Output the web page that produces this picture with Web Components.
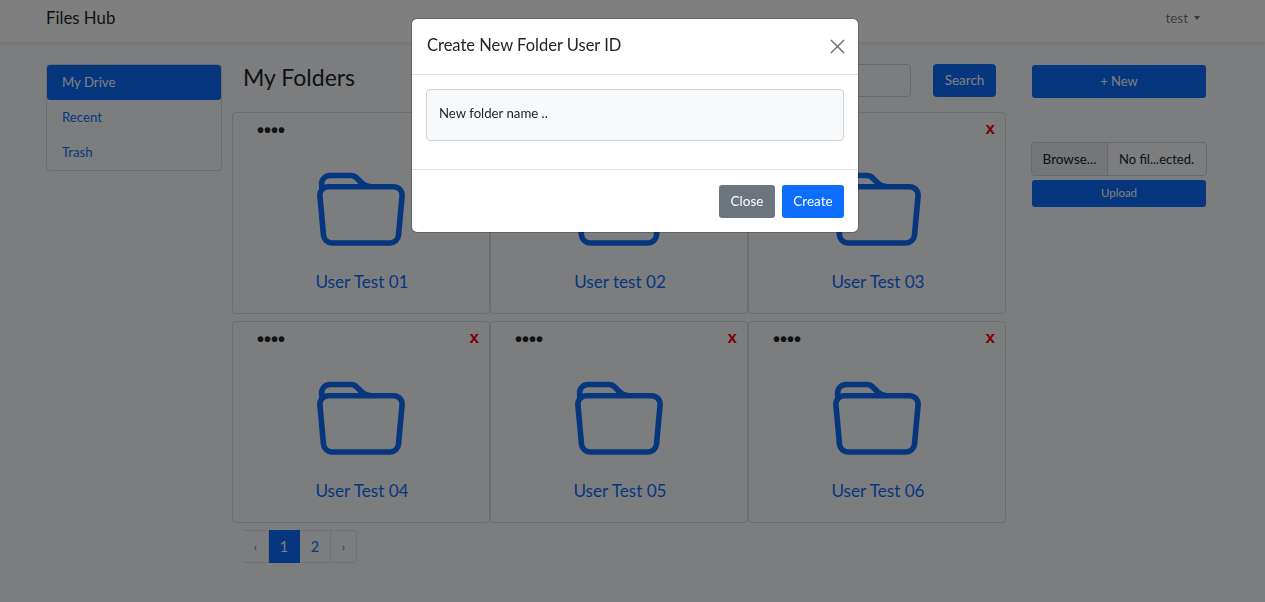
<!DOCTYPE html>
<html lang="en">
<head>
<meta charset="utf-8">
<title>Files Hub</title>
<style>
html, body { margin: 0; height: 100%; }
body {
    background: #f8fafc;
    color: #212529;
    font: 14.4px/1.5 Lato, "Noto Sans", sans-serif;
    overflow: hidden;
}
</style>
</head>
<body>

<hub-navbar brand="Files Hub" user="test"></hub-navbar>

<hub-layout>
    <hub-sidenav slot="left"></hub-sidenav>

    <hub-header slot="main" title="My Folders"></hub-header>
    <hub-folders slot="main">
        <hub-folder>User Test 01</hub-folder>
        <hub-folder>User test 02</hub-folder>
        <hub-folder>User Test 03</hub-folder>
        <hub-folder>User Test 04</hub-folder>
        <hub-folder>User Test 05</hub-folder>
        <hub-folder>User Test 06</hub-folder>
    </hub-folders>
    <hub-pager slot="main"></hub-pager>

    <hub-actions slot="right"></hub-actions>
</hub-layout>

<hub-modal heading="Create New Folder User ID" placeholder="New folder name .."></hub-modal>

<script>
const folderPath = 'M.54 3.87.5 3a2 2 0 0 1 2-2h3.672a2 2 0 0 1 1.414.586l.828.828A2 2 0 0 0 9.828 3h3.982a2 2 0 0 1 1.992 2.181l-.637 7A2 2 0 0 1 13.174 14H2.826a2 2 0 0 1-1.991-1.819l-.637-7a1.99 1.99 0 0 1 .342-1.31zM2.19 4a1 1 0 0 0-.996 1.09l.637 7a1 1 0 0 0 .995.91h10.348a1 1 0 0 0 .995-.91l.637-7A1 1 0 0 0 13.81 4H2.19zm4.69-1.707A1 1 0 0 0 6.172 2H2.5a1 1 0 0 0-1 .981l.006.139C1.72 3.042 1.95 3 2.19 3h5.396l-.707-.707z';

customElements.define('hub-navbar', class extends HTMLElement {
    constructor() {
        super();
        this.attachShadow({ mode: 'open' }).innerHTML = `
        <style>
        :host {
            display: flex;
            align-items: center;
            justify-content: space-between;
            height: 42px;
            padding: 0 65px 0 46px;
            background: #fff;
            box-shadow: 0 2px 4px rgba(0,0,0,.075);
        }
        #brand { font-size: 16.8px; color: rgba(0,0,0,.9); margin-bottom: 6px; }
        #user { font-size: 13.5px; color: rgba(0,0,0,.55); margin-bottom: 6px; display: flex; align-items: center; gap: 6px; }
        #user i { border-top: 4px solid rgba(0,0,0,.55); border-left: 3px solid transparent; border-right: 3px solid transparent; }
        </style>
        <span id="brand">${this.getAttribute('brand')}</span>
        <span id="user">${this.getAttribute('user')}<i></i></span>
        `;
    }
});

customElements.define('hub-layout', class extends HTMLElement {
    constructor() {
        super();
        this.attachShadow({ mode: 'open' }).innerHTML = `
        <style>
        :host {
            display: grid;
            grid-template-columns: 176px 774px 191px;
            column-gap: 10px;
            padding: 22px 0 0 46px;
        }
        #main { display: flex; flex-direction: column; }
        #right { padding-left: 15px; }
        </style>
        <div><slot name="left"></slot></div>
        <div id="main"><slot name="main"></slot></div>
        <div id="right"><slot name="right"></slot></div>
        `;
    }
});

customElements.define('hub-sidenav', class extends HTMLElement {
    constructor() {
        super();
        this.attachShadow({ mode: 'open' }).innerHTML = `
        <style>
        :host {
            display: flex;
            flex-direction: column;
            border: 1px solid rgba(0,0,0,.125);
            border-radius: 4px;
            font-size: 13.2px;
        }
        a { height: 35px; line-height: 35px; padding-left: 15px; color: #0d6efd; text-decoration: none; }
        a.active { background: #0d6efd; color: #fff; border-radius: 3px; }
        </style>
        <a class="active" href="#">My Drive</a>
        <a href="#">Recent</a>
        <a href="#">Trash</a>
        `;
    }
});

customElements.define('hub-header', class extends HTMLElement {
    constructor() {
        super();
        this.attachShadow({ mode: 'open' }).innerHTML = `
        <style>
        :host {
            display: flex;
            align-items: flex-start;
            height: 48px;
            padding-left: 11px;
        }
        h2 { margin: 0; font-size: 23px; font-weight: 400; line-height: 26px; flex: 1; color: #212529; }
        input {
            box-sizing: border-box;
            width: 200px;
            height: 33px;
            margin-right: 22px;
            border: 1px solid #ced4da;
            border-radius: 4px;
            background: transparent;
        }
        button {
            width: 63px;
            height: 33px;
            margin-right: 10px;
            border: 0;
            border-radius: 4px;
            background: #0d6efd;
            color: #fff;
            font: inherit;
            font-size: 13.5px;
        }
        </style>
        <h2>${this.getAttribute('title')}</h2>
        <input type="search" aria-label="Search">
        <button>Search</button>
        `;
    }
});

customElements.define('hub-folders', class extends HTMLElement {
    constructor() {
        super();
        this.attachShadow({ mode: 'open' }).innerHTML = `
        <style>
        :host {
            display: grid;
            grid-template-columns: repeat(3, 258px);
            grid-auto-rows: 202px;
            row-gap: 7px;
        }
        </style>
        <slot></slot>
        `;
    }
});

customElements.define('hub-folder', class extends HTMLElement {
    constructor() {
        super();
        this.attachShadow({ mode: 'open' }).innerHTML = `
        <style>
        :host {
            display: flex;
            flex-direction: column;
            align-items: center;
            box-sizing: border-box;
            position: relative;
            border: 1px solid rgba(0,0,0,.125);
            border-radius: 4px;
            color: #0d6efd;
        }
        #dots { position: absolute; left: 24px; top: 3px; font: 700 20px/28px "Liberation Sans", sans-serif; color: #212529; }
        #close { position: absolute; right: 10px; top: 3px; font: 700 17px/26px "Liberation Sans", sans-serif; color: #f00; }
        svg { display: block; width: 90px; height: 90px; margin: 54px 1px 0 0; fill: currentColor; }
        #name { margin: 12px 0 0 2px; font-size: 17.1px; line-height: 26px; }
        </style>
        <span id="dots">••••</span>
        <span id="close">x</span>
        <svg viewBox="0 0 16 16"><path d="${folderPath}"/></svg>
        <span id="name"><slot></slot></span>
        `;
    }
});

customElements.define('hub-pager', class extends HTMLElement {
    constructor() {
        super();
        this.attachShadow({ mode: 'open' }).innerHTML = `
        <style>
        :host {
            display: flex;
            align-self: flex-start;
            height: 33px;
            margin: 7px 0 0 11px;
            font-size: 14.4px;
        }
        a {
            box-sizing: border-box;
            display: flex;
            align-items: center;
            justify-content: center;
            width: 31px;
            border: 1px solid #dee2e6;
            border-left: 0;
            color: #0d6efd;
            text-decoration: none;
        }
        a.edge { width: 26px; font-size: 12px; color: #6c757d; }
        a.edge:first-child { border-left: 1px solid #dee2e6; border-right: 0; border-radius: 4px 0 0 4px; }
        a.edge:last-child { border-radius: 0 4px 4px 0; }
        a.active { background: #0d6efd; border-color: #0d6efd; color: #fff; }
        </style>
        <a class="edge" href="#">‹</a>
        <a class="active" href="#">1</a>
        <a href="#">2</a>
        <a class="edge" href="#">›</a>
        `;
    }
});

customElements.define('hub-actions', class extends HTMLElement {
    constructor() {
        super();
        this.attachShadow({ mode: 'open' }).innerHTML = `
        <style>
        :host { display: flex; flex-direction: column; margin-top: 1px; font-size: 13px; }
        .btn {
            box-sizing: border-box;
            margin: 0 1px;
            border: 0;
            border-radius: 3px;
            background: #0d6efd;
            color: #fff;
            font: inherit;
        }
        #new { height: 33px; }
        #file {
            display: flex;
            box-sizing: border-box;
            height: 34px;
            margin-top: 44px;
            border: 1px solid #ced4da;
            border-radius: 4px;
            line-height: 32px;
        }
        #browse { width: 76px; flex: none; text-align: center; font-size: 13.5px; background: #e9ecef; border-right: 1px solid #ced4da; border-radius: 3px 0 0 3px; box-sizing: border-box; }
        #chosen { flex: 1; padding-left: 11px; white-space: nowrap; }
        #upload { height: 27px; margin-top: 4px; padding-bottom: 2px; font-size: 11.5px; }
        </style>
        <button class="btn" id="new">+ New</button>
        <div id="file"><span id="browse">Browse...</span><span id="chosen">No fil...ected.</span></div>
        <button class="btn" id="upload">Upload</button>
        `;
    }
});

customElements.define('hub-modal', class extends HTMLElement {
    constructor() {
        super();
        this.attachShadow({ mode: 'open' }).innerHTML = `
        <style>
        :host {
            display: block;
            position: fixed;
            inset: 0;
            background: rgba(0,0,0,.5);
        }
        #dialog {
            box-sizing: border-box;
            width: 448px;
            margin: 18px 0 0 411px;
            background: #fff;
            background-clip: padding-box;
            border: 1px solid rgba(0,0,0,.2);
            border-radius: 6px;
        }
        header {
            display: flex;
            align-items: center;
            justify-content: space-between;
            height: 56px;
            box-sizing: border-box;
            padding: 0 13px 0 15px;
            border-bottom: 1px solid #dee2e6;
        }
        h5 { margin: 0 0 2px; font-size: 16.5px; font-weight: 400; color: #212529; }
        svg { display: block; width: 15px; height: 15px; stroke: #6f6f6f; stroke-width: 1.6; }
        #body { padding: 14px 14px 28px; border-bottom: 1px solid #dee2e6; }
        #field {
            box-sizing: border-box;
            height: 52px;
            line-height: 47px;
            padding-left: 12px;
            background: #f8f9fa;
            border: 1px solid #ced4da;
            border-radius: 4px;
            font-size: 13.2px;
            color: #212529;
        }
        footer {
            display: flex;
            justify-content: flex-end;
            gap: 7px;
            padding: 15px 14px 14px;
        }
        button {
            height: 33px;
            border: 0;
            border-radius: 3px;
            color: #fff;
            font: inherit;
            font-size: 13.5px;
        }
        #close { width: 56px; background: #6c757d; }
        #create { width: 62px; background: #0d6efd; }
        </style>
        <div id="dialog">
            <header>
                <h5>${this.getAttribute('heading')}</h5>
                <svg viewBox="0 0 16 16"><path d="M1 1 15 15M15 1 1 15" fill="none"/></svg>
            </header>
            <div id="body"><div id="field">${this.getAttribute('placeholder')}</div></div>
            <footer>
                <button id="close">Close</button>
                <button id="create">Create</button>
            </footer>
        </div>
        `;
    }
});
</script>
</body>
</html>
